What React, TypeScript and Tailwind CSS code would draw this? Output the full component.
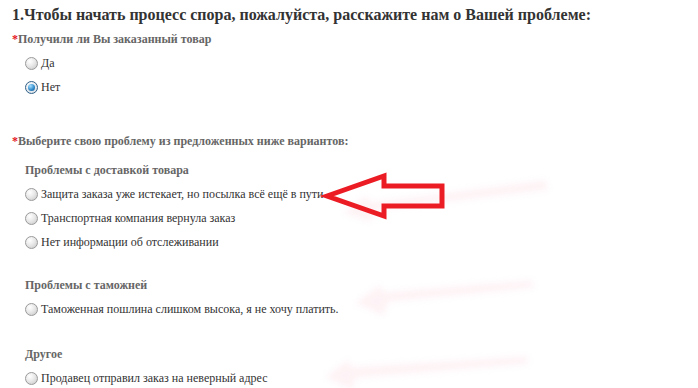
import React from 'react';

const Radio = ({ checked = false }: { checked?: boolean }) =>
  checked ? (
    <span className="flex h-[13px] w-[13px] shrink-0 items-center justify-center rounded-full border border-[#2f5f86] bg-[radial-gradient(circle_at_40%_35%,#ffffff,#cfd8e0)]">
      <span className="h-[7px] w-[7px] rounded-full bg-[radial-gradient(circle_at_35%_30%,#a6e0ff,#2a86c8_60%,#13507f)]" />
    </span>
  ) : (
    <span className="h-[13px] w-[13px] shrink-0 rounded-full border border-[#9a9a9a] bg-[radial-gradient(circle_at_35%_30%,#ffffff,#e9e9e9_45%,#c4c4c4)]" />
  );

const Option = ({ text, checked }: { text: string; checked?: boolean }) => (
  <div className="flex h-6 items-center gap-[3px] pl-[13px] text-[12px] leading-6 text-[#333]">
    <Radio checked={checked} />
    <span>{text}</span>
  </div>
);

const Question = ({ text, className = '' }: { text: string; className?: string }) => (
  <div className={`h-6 text-[12px] font-bold leading-6 text-[#666] ${className}`}>
    <span className="text-[#e4131b]">*</span>
    {text}
  </div>
);

const Group = ({ text, className = '' }: { text: string; className?: string }) => (
  <div className={`h-6 pl-[13px] text-[12px] font-bold leading-6 text-[#666] ${className}`}>{text}</div>
);

export default function App() {
  return (
    <div className="relative h-[388px] w-[698px] overflow-hidden bg-white font-['Liberation_Serif',serif]">
      <div className="pl-3 pt-[3px]">
        <h1 className="h-6 text-[16px] font-bold leading-6 text-[#333]">
          1.Чтобы начать процесс спора, пожалуйста, расскажите нам о Вашей проблеме:
        </h1>

        <Question text="Получили ли Вы заказанный товар" />
        <Option text="Да" />
        <Option text="Нет" checked />

        <Question text="Выберите свою проблему из предложенных ниже вариантов:" className="mt-[30px]" />
        <Group text="Проблемы с доставкой товара" className="mt-[5px]" />
        <Option text="Защита заказа уже истекает, но посылка всё ещё в пути" />
        <Option text="Транспортная компания вернула заказ" />
        <Option text="Нет информации об отслеживании" />

        <Group text="Проблемы с таможней" className="mt-[19px]" />
        <Option text="Таможенная пошлина слишком высока, я не хочу платить." />

        <Group text="Другое" className="mt-[21px]" />
        <Option text="Продавец отправил заказ на неверный адрес" />
      </div>

      {/* faint watermark arrows + red pointer */}
      <svg className="pointer-events-none absolute left-0 top-0" width="698" height="388" viewBox="0 0 698 388">
        <defs>
          <filter id="blur" x="-20%" y="-50%" width="140%" height="200%">
            <feGaussianBlur stdDeviation="3" />
          </filter>
        </defs>
        <g fill="#f9c9d4" opacity="0.22" filter="url(#blur)">
          <polygon points="343,213 365,196 372,202 546,180 548,190 378,210 370,222" />
          <polygon points="355,303 380,285 384,292 532,280 534,288 388,302 384,316" />
          <polygon points="325,377 348,360 352,367 527,356 528,364 356,378 352,390" />
        </g>
        <polygon
          points="327,196 384,176 384,186 442,186 442,206 384,206 384,216"
          fill="none"
          stroke="#ec1c24"
          strokeWidth="5"
          strokeLinejoin="miter"
        />
      </svg>
    </div>
  );
}
